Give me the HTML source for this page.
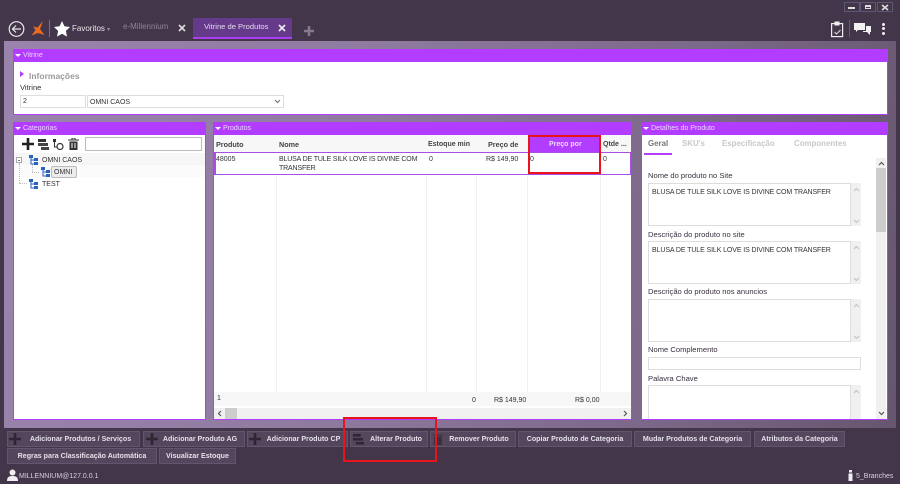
<!DOCTYPE html>
<html><head><meta charset="utf-8"><style>
html,body{margin:0;padding:0}
body{width:900px;height:484px;overflow:hidden;position:relative;background:#43364a;font-family:"Liberation Sans",sans-serif;font-size:7px;color:#333}
.a{position:absolute;white-space:nowrap;line-height:10px}
.t{font-size:7px;color:#333;margin-top:1px}
.l{font-size:7.6px;color:#3a3040}
.b{position:absolute;box-sizing:border-box}
.panel{position:absolute;box-sizing:border-box;background:#fff;border:1px solid #b23cff}
.ph{position:absolute;background:#b23cff;color:#ecd6fb;height:13px;line-height:13px;font-size:7px;padding-left:10px;box-sizing:border-box}
.ph:before{content:"";position:absolute;left:2px;top:5px;border:3px solid transparent;border-top:3px solid #fff;border-bottom:0}
.btn{position:absolute;box-sizing:border-box;height:16px;background:#54465c;border:1px solid #63556b;color:#e6e0ea;font-weight:bold;font-size:7.1px;line-height:14px;text-align:center;white-space:nowrap}
.ta{position:absolute;box-sizing:border-box;background:#fff;border:1px solid #ddd}
.sb{position:absolute;background:#f0f0f0;width:10px}
.col{position:absolute;width:1px;background:#f0f0f0;top:175px;height:217px}
.hc{position:absolute;top:140px;line-height:10px;font-size:7.2px;color:#444;font-weight:bold;white-space:nowrap}
.tab{position:absolute;top:139px;line-height:10px;font-weight:bold;color:#c8c8c8;font-size:7.9px;white-space:nowrap}
svg.u,svg.d{position:absolute;width:7px;height:5px}
</style></head><body>
<!-- window controls -->
<div class="b" style="left:844px;top:2px;width:16px;height:10px;border:1px solid #5c5a72"></div>
<div class="b" style="left:848px;top:7px;width:7px;height:2px;background:#ddd"></div>
<div class="b" style="left:860px;top:2px;width:16px;height:10px;border:1px solid #5c5a72"></div>
<div class="b" style="left:865px;top:5px;width:6px;height:4px;border:1px solid #ddd;border-top-width:2px"></div>
<div class="b" style="left:877px;top:2px;width:16px;height:10px;border:1px solid #5c5a72"></div>
<svg class="b" style="left:881px;top:4px" width="8" height="7"><path d="M1 1L7 6M7 1L1 6" stroke="#ddd" stroke-width="1.6"/></svg>
<!-- top right icons -->
<svg class="b" style="left:830px;top:20px" width="16" height="18"><rect x="1.600" y="3.600" width="11" height="13" fill="none" stroke="#eee" stroke-width="1.200"/><rect x="4.500" y="1.500" width="5" height="4" fill="#eee"/><path d="M4.500 12l2 2 4-4" stroke="#ddd" fill="none"/></svg>
<div class="b" style="left:849px;top:20px;width:1px;height:17px;background:#6a5c72"></div>
<svg class="b" style="left:853px;top:22px" width="20" height="14"><path d="M1 1h11v7H5l-2 2V8H1z" fill="#f2f2f2"/><path d="M13 4h5v6h-1v3l-3-3h-4V9h3z" fill="#f2f2f2"/></svg>
<div class="b" style="left:882px;top:23px;width:3px;height:3px;background:#eee;border-radius:50%"></div>
<div class="b" style="left:882px;top:27px;width:3px;height:3px;background:#eee;border-radius:50%"></div>
<div class="b" style="left:882px;top:32px;width:3px;height:3px;background:#eee;border-radius:50%"></div>
<!-- top left -->
<svg class="b" style="left:8px;top:20px" width="18" height="18"><circle cx="8.500" cy="9" r="7.300" fill="none" stroke="#e8e8e8" stroke-width="1.200"/><path d="M13 9H4.500M8 5.500L4.500 9L8 12.500" fill="none" stroke="#e8e8e8" stroke-width="1.200"/></svg>
<svg class="b" style="left:30px;top:20px" width="16" height="17"><path d="M13 1L10 9L14.500 15L8 13L1.500 15.500L5.500 10L3 6.500L7.500 7.500Z" fill="#ec6a1f"/></svg>
<div class="b" style="left:49px;top:20px;width:1px;height:17px;background:#7c6e84"></div>
<svg class="b" style="left:53px;top:20px" width="18" height="17"><path d="M9 1l2.400 5.300 5.600.7-4.100 3.900 1.100 5.700L9 13.800 4 16.600l1.100-5.700L1 7l5.600-.7z" fill="#fff"/></svg>
<div class="a" style="left:72px;top:24px;color:#e8e4ea;font-size:8px">Favoritos <span style="color:#99909f;font-size:6px">▾</span></div>
<div class="a" style="left:123px;top:22px;color:#8e8494;font-size:8px">e-Millennium</div>
<svg class="b" style="left:178px;top:24px" width="8" height="8"><path d="M1 1L7 7M7 1L1 7" stroke="#ddd" stroke-width="1.600"/></svg>
<div class="b" style="left:193px;top:18px;width:99px;height:21px;background:#653a8b;border-bottom:2px solid #a93ff0"></div>
<div class="a" style="left:204px;top:22px;color:#e4dcea;font-size:7.600px">Vitrine de Produtos</div>
<svg class="b" style="left:278px;top:24px" width="8" height="8"><path d="M1 1L7 7M7 1L1 7" stroke="#eee" stroke-width="1.600"/></svg>
<svg class="b" style="left:304px;top:26px" width="10" height="10"><path d="M5 0v10M0 5h10" stroke="#85798c" stroke-width="2.600"/></svg>
<!-- main bg -->
<div class="b" style="left:4px;top:41px;width:892px;height:387px;background:linear-gradient(100deg,#9b84ac 0%,#8f7aa0 40%,#7b6787 75%,#67566f 100%)"></div>
<!-- Vitrine -->
<div class="panel" style="left:13px;top:49px;width:875px;height:66px"></div>
<div class="ph" style="left:13px;top:49px;width:875px">Vitrine</div>
<div class="b" style="left:20px;top:71px;border-left:4px solid #b23cff;border-top:3px solid transparent;border-bottom:3px solid transparent"></div>
<div class="a" style="left:29px;top:71px;font-weight:bold;color:#9a9a9a;font-size:8.500px">Informações</div>
<div class="a" style="left:20px;top:83px;color:#333;font-size:7.600px">Vitrine</div>
<div class="ta" style="left:20px;top:95px;width:66px;height:13px"></div>
<div class="a t" style="left:23px;top:96px">2</div>
<div class="ta" style="left:87px;top:95px;width:197px;height:13px"></div>
<div class="a t" style="left:90px;top:97px">OMNI CAOS</div>
<svg class="b" style="left:274px;top:99px" width="7" height="5"><path d="M1 1l2.500 2.500L6 1" fill="none" stroke="#777" stroke-width="1.200"/></svg>
<!-- Categorias -->
<div class="panel" style="left:13px;top:122px;width:193px;height:298px"></div>
<div class="ph" style="left:13px;top:122px;width:193px">Categorias</div>
<svg class="b" style="left:22px;top:138px" width="12" height="12"><path d="M6 0v12M0 6h12" stroke="#222" stroke-width="2.600"/></svg>
<svg class="b" style="left:38px;top:138px" width="11" height="12"><rect x="0" y="1" width="8" height="3" fill="#333"/><rect x="0" y="5" width="10" height="3" fill="#444"/><rect x="3" y="9" width="8" height="3" fill="#444"/></svg>
<svg class="b" style="left:52px;top:139px" width="12" height="11"><rect x="1" y="0" width="3" height="3" fill="#333"/><path d="M2.500 3v5h3" stroke="#333" fill="none"/><circle cx="8" cy="7.500" r="3" fill="none" stroke="#333" stroke-width="1.200"/></svg>
<svg class="b" style="left:68px;top:138px" width="11" height="12"><path d="M0 2h11M4 2V0h3v2" stroke="#333" fill="none"/><path d="M1.500 3.500h8V12h-8z" fill="#333"/><path d="M4 5v5M7 5v5" stroke="#fff"/></svg>
<div class="b" style="left:85px;top:137px;width:117px;height:14px;background:#fff;border:1px solid #bbb"></div>
<div class="b" style="left:14px;top:153px;width:191px;height:12px;background:#f6f6f6"></div>
<div class="b" style="left:14px;top:165px;width:191px;height:12px;background:#fbfbfb"></div>
<div class="b" style="left:16px;top:157px;width:6px;height:6px;border:1px solid #aaa;background:#fff"></div>
<div class="b" style="left:18px;top:160px;width:2px;height:1px;background:#777"></div>
<div class="b" style="left:19px;top:163px;width:1px;height:20px;border-left:1px dotted #bbb"></div>
<div class="b" style="left:19px;top:183px;width:8px;border-top:1px dotted #bbb"></div>
<div class="b" style="left:32px;top:165px;width:1px;height:7px;border-left:1px dotted #bbb"></div>
<div class="b" style="left:32px;top:172px;width:7px;border-top:1px dotted #bbb"></div>
<svg class="b" style="left:29px;top:155px" width="9" height="10"><path d="M0 0h4v3H0zM5 3h4v3H5zM5 7h4v3H5z" fill="#2a62c0"/><path d="M2 3v6h3M2 5h3" stroke="#2a62c0" fill="none"/></svg>
<svg class="b" style="left:41px;top:167px" width="9" height="10"><path d="M0 0h4v3H0zM5 3h4v3H5zM5 7h4v3H5z" fill="#2a62c0"/><path d="M2 3v6h3M2 5h3" stroke="#2a62c0" fill="none"/></svg>
<svg class="b" style="left:29px;top:179px" width="9" height="10"><path d="M0 0h4v3H0zM5 3h4v3H5zM5 7h4v3H5z" fill="#2a62c0"/><path d="M2 3v6h3M2 5h3" stroke="#2a62c0" fill="none"/></svg>
<div class="a t" style="left:42px;top:155px">OMNI CAOS</div>
<div class="b" style="left:51px;top:166px;width:26px;height:12px;background:#ececec;border:1px solid #bbb;border-radius:2px"></div>
<div class="a t" style="left:54px;top:167px">OMNI</div>
<div class="a t" style="left:42px;top:179px">TEST</div>
<!-- Produtos -->
<div class="panel" style="left:213px;top:122px;width:419px;height:298px"></div>
<div class="ph" style="left:213px;top:122px;width:419px">Produtos</div>
<div class="b" style="left:214px;top:135px;width:417px;height:17px;background:#f7f7f7"></div>
<div class="hc" style="left:216px">Produto</div>
<div class="hc" style="left:279px">Nome</div>
<div class="hc" style="left:428px;font-size:7px">Estoque min</div>
<div class="hc" style="left:488px">Preço de</div>
<div class="b" style="left:528px;top:135px;width:72px;height:18px;background:#b23cff"></div>
<div class="hc" style="left:549px;color:#eedcfb;font-size:7px">Preço por</div>
<div class="hc" style="left:603px;font-size:7px">Qtde ...</div>
<div class="col" style="left:276px"></div><div class="col" style="left:426px"></div><div class="col" style="left:476px"></div><div class="col" style="left:527px"></div><div class="col" style="left:600px"></div>
<div class="b" style="left:214px;top:152px;width:417px;height:23px;background:#fff;border:1px solid #a94fe6;border-left-width:2px;border-top-width:1.500px;border-bottom-width:1.500px"></div>
<div class="a t" style="left:216px;top:154px">48005</div>
<div class="a t" style="left:279px;top:154px;line-height:9px;letter-spacing:-.15px">BLUSA DE TULE SILK LOVE IS DIVINE COM<br>TRANSFER</div>
<div class="a t" style="left:429px;top:154px">0</div>
<div class="a t" style="left:486px;top:154px">R$ 149,90</div>
<div class="a t" style="left:530px;top:154px">0</div>
<div class="a t" style="left:603px;top:154px">0</div>
<div class="b" style="left:214px;top:392px;width:417px;height:14px;background:#f7f7f7"></div>
<div class="a t" style="left:217px;top:393px">1</div>
<div class="a t" style="left:472px;top:395px">0</div>
<div class="a t" style="left:494px;top:395px">R$ 149,90</div>
<div class="a t" style="left:575px;top:395px">R$ 0,00</div>
<div class="b" style="left:214px;top:408px;width:417px;height:11px;background:#f0f0f0"></div>
<div class="b" style="left:225px;top:408px;width:12px;height:11px;background:#cdcdcd"></div>
<svg class="b" style="left:217px;top:410px" width="6" height="7"><path d="M4 1L1.500 3.500 4 6" fill="none" stroke="#555" stroke-width="1.200"/></svg>
<svg class="b" style="left:622px;top:410px" width="6" height="7"><path d="M2 1l2.500 2.500L2 6" fill="none" stroke="#555" stroke-width="1.200"/></svg>
<!-- Detalhes -->
<div class="panel" style="left:641px;top:122px;width:247px;height:298px"></div>
<div class="ph" style="left:641px;top:122px;width:247px">Detalhes do Produto</div>
<div class="tab" style="left:648px;color:#777">Geral</div>
<div class="tab" style="left:682px">SKU's</div>
<div class="tab" style="left:722px">Especificação</div>
<div class="tab" style="left:794px">Componentes</div>
<div class="b" style="left:644px;top:153px;width:28px;height:2px;background:#b23cff"></div>
<div class="sb" style="left:876px;top:158px;height:261px"></div>
<div class="b" style="left:876px;top:168px;width:10px;height:64px;background:#cdcdcd"></div>
<svg class="b" style="left:878px;top:161px" width="7" height="5"><path d="M1 4l2.500-2.500L6 4" fill="none" stroke="#555" stroke-width="1.200"/></svg>
<svg class="b" style="left:878px;top:411px" width="7" height="5"><path d="M1 1l2.500 2.500L6 1" fill="none" stroke="#555" stroke-width="1.200"/></svg>

<div class="a l" style="left:648px;top:171px">Nome do produto no Site</div>
<div class="ta" style="left:648px;top:183px;width:203px;height:43px"></div><div class="sb" style="left:851px;top:183px;height:43px"></div>
<svg class="u" style="left:853px;top:187px"><path d="M1 4l2.500-2.500L6 4" fill="none" stroke="#c0c0c0"/></svg>
<svg class="d" style="left:853px;top:219px"><path d="M1 1l2.500 2.500L6 1" fill="none" stroke="#c0c0c0"/></svg>
<div class="a t" style="left:652px;top:187px;letter-spacing:-.1px">BLUSA DE TULE SILK LOVE IS DIVINE COM TRANSFER</div>
<div class="a l" style="left:648px;top:230px">Descrição do produto no site</div>
<div class="ta" style="left:648px;top:241px;width:203px;height:43px"></div><div class="sb" style="left:851px;top:241px;height:43px"></div>
<svg class="u" style="left:853px;top:245px"><path d="M1 4l2.500-2.500L6 4" fill="none" stroke="#c0c0c0"/></svg>
<svg class="d" style="left:853px;top:277px"><path d="M1 1l2.500 2.500L6 1" fill="none" stroke="#c0c0c0"/></svg>
<div class="a t" style="left:652px;top:245px;letter-spacing:-.1px">BLUSA DE TULE SILK LOVE IS DIVINE COM TRANSFER</div>
<div class="a l" style="left:648px;top:287px">Descrição do produto nos anuncios</div>
<div class="ta" style="left:648px;top:299px;width:203px;height:43px"></div><div class="sb" style="left:851px;top:299px;height:43px"></div>
<svg class="u" style="left:853px;top:303px"><path d="M1 4l2.500-2.500L6 4" fill="none" stroke="#c0c0c0"/></svg>
<svg class="d" style="left:853px;top:335px"><path d="M1 1l2.500 2.500L6 1" fill="none" stroke="#c0c0c0"/></svg>
<div class="a l" style="left:648px;top:345px">Nome Complemento</div>
<div class="ta" style="left:648px;top:357px;width:213px;height:13px"></div>
<div class="a l" style="left:648px;top:374px">Palavra Chave</div>
<div class="ta" style="left:648px;top:385px;width:203px;height:34px;border-bottom:0"></div><div class="sb" style="left:851px;top:385px;height:34px"></div>
<svg class="u" style="left:853px;top:389px"><path d="M1 4l2.500-2.500L6 4" fill="none" stroke="#c0c0c0"/></svg>
<!-- Red highlights -->
<div class="b" style="left:528px;top:135px;width:73px;height:39px;border:2px solid #e8141c"></div>
<!-- Buttons -->
<div class="btn" style="left:7px;top:431px;width:133px;padding-left:14px">Adicionar Produtos / Serviços</div>
<div class="btn" style="left:143px;top:431px;width:102px;padding-left:12px">Adicionar Produto AG</div>
<div class="btn" style="left:247px;top:431px;width:101px;padding-left:12px">Adicionar Produto CP</div>
<div class="btn" style="left:350px;top:431px;width:78px;padding-left:14px">Alterar Produto</div>
<div class="btn" style="left:430px;top:431px;width:86px;padding-left:12px">Remover Produto</div>
<div class="btn" style="left:518px;top:431px;width:114px">Copiar Produto de Categoria</div>
<div class="btn" style="left:634px;top:431px;width:117px">Mudar Produtos de Categoria</div>
<div class="btn" style="left:754px;top:431px;width:91px">Atributos da Categoria</div>
<div class="btn" style="left:7px;top:448px;width:150px">Regras para Classificação Automática</div>
<div class="btn" style="left:159px;top:448px;width:77px">Visualizar Estoque</div>
<svg class="b" style="left:9px;top:433px" width="12" height="12"><path d="M6 0v12M0 6h12" stroke="#2e2633" stroke-width="2.600"/></svg>
<svg class="b" style="left:146px;top:433px" width="12" height="12"><path d="M6 0v12M0 6h12" stroke="#2e2633" stroke-width="2.600"/></svg>
<svg class="b" style="left:249px;top:433px" width="12" height="12"><path d="M6 0v12M0 6h12" stroke="#2e2633" stroke-width="2.600"/></svg>
<svg class="b" style="left:353px;top:433px" width="11" height="12"><rect x="0" y="1" width="8" height="2.500" fill="#2e2633"/><rect x="0" y="5" width="10" height="2.500" fill="#2e2633"/><rect x="3" y="9" width="8" height="2.500" fill="#2e2633"/></svg>
<svg class="b" style="left:433px;top:433px" width="10" height="12"><path d="M0 2h10" stroke="#3a3040"/><path d="M1 3.500h8V12H1z" fill="#3a3040"/></svg>
<div class="b" style="left:343px;top:417px;width:94px;height:45px;border:2px solid #e8141c"></div>
<!-- Status -->
<svg class="b" style="left:7px;top:469px" width="11" height="12"><circle cx="5.500" cy="3.500" r="3" fill="#eee"/><path d="M0 12c0-4 2-5 5.500-5s5.500 1 5.500 5z" fill="#eee"/></svg>
<div class="a" style="left:19px;top:472px;color:#d8d2dc;font-size:7px">MILLENNIUM@127.0.0.1</div>
<svg class="b" style="left:848px;top:470px" width="5" height="11"><rect x="1" y="0" width="3" height="2.500" fill="#eee"/><rect x="0.500" y="3.500" width="4" height="7.500" fill="#eee"/></svg>
<div class="a" style="left:856px;top:472px;color:#d8d2dc;font-size:7px">5_Branches</div>
</body></html>
